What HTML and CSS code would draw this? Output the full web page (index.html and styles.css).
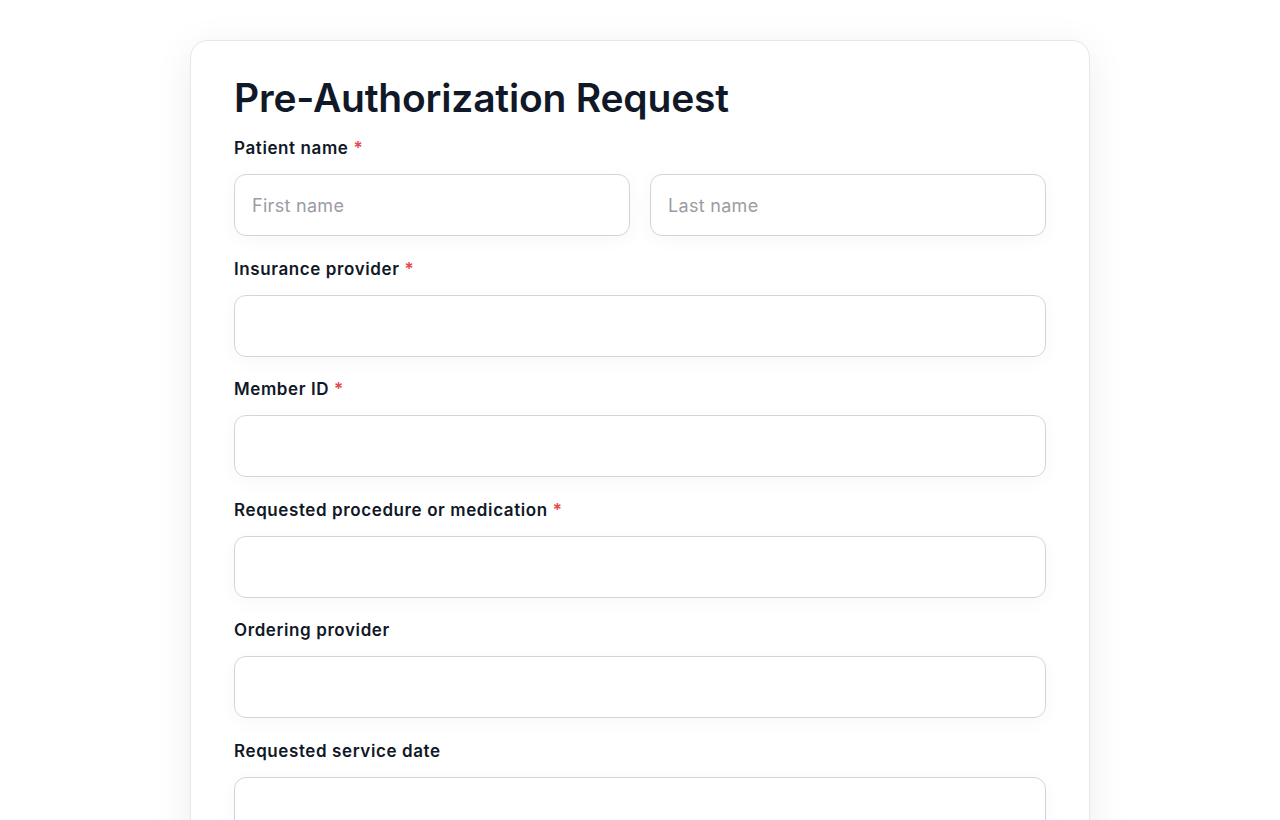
FILE: index.html
```html
<!DOCTYPE html>
<html lang="en">

<head>
    <meta charset="UTF-8">
    <meta name="viewport" content="width=device-width, initial-scale=1.0">
    <title>Pre-Authorization Request</title>
    <link rel="stylesheet" href="styles.css">
</head>

<body>

    <div class="container">
        <h1>Pre-Authorization Request</h1>
        <form id="preAuthForm">
            <div class="form-group">
                <label for="firstName">Patient name <span class="req">*</span></label>
                <div class="row">
                    <input type="text" id="firstName" name="firstName" placeholder="First name" required>
                    <input type="text" id="lastName" name="lastName" placeholder="Last name" required>
                </div>
            </div>
            <div class="form-group">
                <label for="insurance">Insurance provider <span class="req">*</span></label>
                <input type="text" id="insurance" name="insurance" required>
            </div>
            <div class="form-group">
                <label for="memberId">Member ID <span class="req">*</span></label>
                <input type="text" id="memberId" name="memberId" required>
            </div>
            <div class="form-group">
                <label for="procedure">Requested procedure or medication <span class="req">*</span></label>
                <input type="text" id="procedure" name="procedure" required>
            </div>
            <div class="form-group">
                <label for="provider">Ordering provider</label>
                <input type="text" id="provider" name="provider">
            </div>
            <div class="form-group">
                <label for="serviceDate">Requested service date</label>
                <input type="text" id="serviceDate" name="serviceDate">
            </div>
        </form>
    </div>

</body>

</html>
```

FILE: styles.css
```css
body {
    font-family: 'Inter', 'Noto Sans', sans-serif;
    background-color: #fff;
    margin: 0;
    padding: 0;
}

.container {
    width: 900px;
    box-sizing: border-box;
    margin: 40px auto;
    background-color: #fff;
    padding: 33px 43px 40px;
    border: 1px solid #e6e7eb;
    border-radius: 18px;
    box-shadow: 0 8px 40px rgba(0, 0, 0, 0.07);
}

h1 {
    color: #111827;
    font-size: 39px;
    font-weight: 600;
    letter-spacing: -0.2px;
    line-height: 48px;
    margin: 0 0 14px;
}

.form-group {
    margin-bottom: 20.5px;
}

label {
    display: block;
    font-weight: 600;
    font-size: 17px;
    letter-spacing: 0.6px;
    line-height: 24px;
    color: #111827;
    margin-bottom: 14px;
}

.req {
    color: #e5484d;
}

.row {
    display: flex;
    gap: 20px;
}

input[type="text"] {
    width: 100%;
    height: 62px;
    padding: 0 17px;
    border: 1px solid #d4d5dc;
    border-radius: 12px;
    font-family: inherit;
    font-size: 18px;
    letter-spacing: 0.3px;
    color: #111827;
    background: #fff;
    box-sizing: border-box;
    box-shadow: 0 4px 20px rgba(0, 0, 0, 0.035);
}

input::placeholder {
    color: #9b9ca3;
}

input:focus {
    border-color: #6366f1;
    outline: none;
}
```
